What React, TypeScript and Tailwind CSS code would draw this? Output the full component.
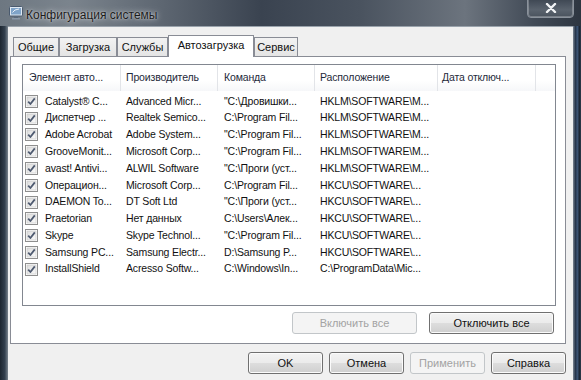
import React from "react";

const rows: [string, string, string, string][] = [
  ["Catalyst® C...", "Advanced Micr...", "\"C:\\Дровишки...", "HKLM\\SOFTWARE\\M..."],
  ["Диспетчер ...", "Realtek Semico...", "C:\\Program Fil...", "HKLM\\SOFTWARE\\M..."],
  ["Adobe Acrobat", "Adobe System...", "\"C:\\Program Fil...", "HKLM\\SOFTWARE\\M..."],
  ["GrooveMonit...", "Microsoft Corp...", "\"C:\\Program Fil...", "HKLM\\SOFTWARE\\M..."],
  ["avast! Antivi...", "ALWIL Software", "\"C:\\Проги (уст...", "HKLM\\SOFTWARE\\M..."],
  ["Операцион...", "Microsoft Corp...", "C:\\Program Fil...", "HKCU\\SOFTWARE\\..."],
  ["DAEMON To...", "DT Soft Ltd", "\"C:\\Проги (уст...", "HKCU\\SOFTWARE\\..."],
  ["Praetorian", "Нет данных", "C:\\Users\\Алек...", "HKCU\\SOFTWARE\\..."],
  ["Skype", "Skype Technol...", "\"C:\\Program Fil...", "HKCU\\SOFTWARE\\..."],
  ["Samsung PC...", "Samsung Electr...", "D:\\Samsung P...", "HKCU\\SOFTWARE\\..."],
  ["InstallShield", "Acresso Softw...", "C:\\Windows\\In...", "C:\\ProgramData\\Mic..."],
];

function Check() {
  return (
    <svg width="13" height="13" viewBox="0 0 13 13" className="shrink-0">
      <defs>
        <linearGradient id="cb" x1="0" y1="0" x2="1" y2="1">
          <stop offset="0" stopColor="#dcdcdc" />
          <stop offset="1" stopColor="#fbfbfb" />
        </linearGradient>
      </defs>
      <rect x="0.5" y="0.5" width="12" height="12" fill="#fff" stroke="#8f8f8f" />
      <rect x="2" y="2" width="9" height="9" fill="url(#cb)" stroke="#c4c4c4" strokeWidth="0.6" />
      <path d="M3.2 6.6 L5.4 9 L9.8 3.4" fill="none" stroke="#4e5a70" strokeWidth="1.8" strokeLinejoin="round" />
    </svg>
  );
}

function Btn({ label, w, disabled }: { label: string; w: string; disabled?: boolean }) {
  return disabled ? (
    <div
      className={`${w} h-[22px] flex items-center justify-center rounded-[3px] border border-[#c2c6c9] bg-[#f4f4f4] text-[#a3a3a3]`}
    >
      {label}
    </div>
  ) : (
    <div
      className={`${w} h-[22px] flex items-center justify-center rounded-[3px] border border-[#707070] bg-[linear-gradient(to_bottom,#f3f3f3_0%,#ebebeb_50%,#dddddd_51%,#cfcfcf_100%)] shadow-[inset_0_0_0_1px_#fbfbfb] text-[#111]`}
    >
      {label}
    </div>
  );
}

export default function App() {
  return (
    <div className="w-[581px] h-[380px] overflow-hidden flex flex-col bg-[#2b3440] font-['Liberation_Sans',Arial,sans-serif] text-[10.5px] tracking-[-0.15px] text-[#111]">
      {/* Title bar */}
      <div className="h-[26px] shrink-0 flex items-start bg-[linear-gradient(to_right,#6d7781_0%,#7b848d_12%,#5d6671_28%,#3a4350_45%,#4a535f_62%,#6c747e_80%,#414a56_92%,#2e3641_100%)]">
        <div className="ml-[8px] mt-[5px] w-[16px] h-[16px]">
          <svg width="16" height="16" viewBox="0 0 16 16">
            <rect x="1.5" y="1.5" width="13" height="9.5" rx="1" fill="#dfe8f2" stroke="#4a5a6e" />
            <rect x="3" y="3" width="10" height="6.5" fill="#7fa3c8" />
            <path d="M4.5 7.5 L7 5 L11 4" stroke="#e8f0f8" strokeWidth="1" fill="none" />
            <rect x="6" y="11" width="4" height="2" fill="#5b6a7c" />
            <rect x="4" y="13" width="8" height="1.5" fill="#8a98a8" />
          </svg>
        </div>
        <div className="ml-[2px] mt-[6px] text-[12px] tracking-normal text-[#1c1c1c] [text-shadow:0_0_6px_rgba(255,255,255,0.75),0_0_2px_rgba(255,255,255,0.6)]">
          Конфигурация системы
        </div>
        <div className="ml-auto mr-[7px] mt-[-2px] w-[47px] h-[20px] rounded-b-[4px] border border-[#8a929c] bg-[linear-gradient(to_bottom,#3d4652,#5a636e_60%,#4a535e)] shadow-[inset_0_0_0_1px_rgba(255,255,255,0.25)] flex items-center justify-center">
          <svg width="12" height="10" viewBox="0 0 12 10">
            <path d="M2 1 L10 9 M10 1 L2 9" stroke="#f2f4f6" strokeWidth="2.4" strokeLinecap="round" />
          </svg>
        </div>
      </div>

      {/* Body with frame */}
      <div className="flex flex-1 min-h-0">
        <div className="w-[8px] shrink-0 bg-[linear-gradient(to_right,#1d2630,#33404e_60%,#7a848e)]" />
        <div className="flex-1 min-w-0 bg-[#f0f0f0] border-t border-[#9aa3ac] pl-[2px] pt-[8px] flex flex-col">
          {/* Tabs */}
          <div className="h-[21px] flex items-end pl-[3px] text-[11px] tracking-normal">
            {[
              ["Общие", "w-[46px]"],
              ["Загрузка", "w-[58px]"],
              ["Службы", "w-[51px]"],
            ].map(([t, w]) => (
              <div
                key={t}
                className={`${w} h-[19px] flex items-center justify-center border border-b-0 border-[#898c95] bg-[linear-gradient(to_bottom,#f2f2f2,#e4e4e4)]`}
              >
                {t}
              </div>
            ))}
            <div className="relative z-10 w-[86px] h-[22px] mb-[-1px] pb-[2px] flex items-center justify-center border border-b-0 border-[#898c95] bg-white">
              Автозагрузка
            </div>
            <div className="w-[44px] h-[19px] flex items-center justify-center border border-b-0 border-[#898c95] bg-[linear-gradient(to_bottom,#f2f2f2,#e4e4e4)]">
              Сервис
            </div>
          </div>

          {/* Panel */}
          <div className="w-[556px] h-[288px] shrink-0 border border-[#898c95] bg-white px-[11px] pt-[7px] flex flex-col">
            <div className="w-[534px] h-[242px] shrink-0 border border-[#828790] bg-white flex flex-col">
              {/* Header */}
              <div className="h-[26px] flex items-center text-[#1e2a3a] bg-[linear-gradient(to_bottom,#ffffff,#ffffff_60%,#f6f7f9)]">
                <div className="w-[98px] h-full flex items-center pl-[6px] border-r border-[#e2e4e8]">Элемент авто...</div>
                <div className="w-[97px] h-full flex items-center pl-[5px] border-r border-[#e2e4e8]">Производитель</div>
                <div className="w-[97px] h-full flex items-center pl-[6px] border-r border-[#e2e4e8]">Команда</div>
                <div className="w-[123px] h-full flex items-center pl-[5px] border-r border-[#e2e4e8]">Расположение</div>
                <div className="w-[98px] h-full flex items-center pl-[4px] border-r border-[#e2e4e8]">Дата отключ...</div>
              </div>
              {/* Rows */}
              <div className="pt-[2px] flex flex-col">
                {rows.map((r, i) => (
                  <div key={i} className="h-[16.8px] flex items-center whitespace-nowrap">
                    <div className="w-[98px] flex items-center pl-[2px] gap-[7px] overflow-hidden">
                      <Check />
                      <span>{r[0]}</span>
                    </div>
                    <div className="w-[97px] pl-[5px] overflow-hidden">{r[1]}</div>
                    <div className="w-[97px] pl-[6px] overflow-hidden">{r[2]}</div>
                    <div className="w-[123px] pl-[5px] overflow-hidden">{r[3]}</div>
                    <div className="w-[98px]" />
                  </div>
                ))}
              </div>
            </div>
            <div className="mt-[6px] flex justify-end gap-[12px] text-[11px] tracking-normal">
              <Btn label="Включить все" w="w-[125px]" disabled />
              <Btn label="Отключить все" w="w-[125px]" />
            </div>
          </div>

          {/* Bottom buttons */}
          <div className="mt-[8px] flex justify-end gap-[6px] pr-[7px] text-[11px] tracking-normal">
            <Btn label="OK" w="w-[75px]" />
            <Btn label="Отмена" w="w-[75px]" />
            <Btn label="Применить" w="w-[75px]" disabled />
            <Btn label="Справка" w="w-[75px]" />
          </div>
        </div>
        <div className="w-[8px] shrink-0 bg-[linear-gradient(to_right,#7d8793,#26354a_30%,#3d5575_55%,#1c2633_80%,#2f3c4c)]" />
      </div>
    </div>
  );
}
